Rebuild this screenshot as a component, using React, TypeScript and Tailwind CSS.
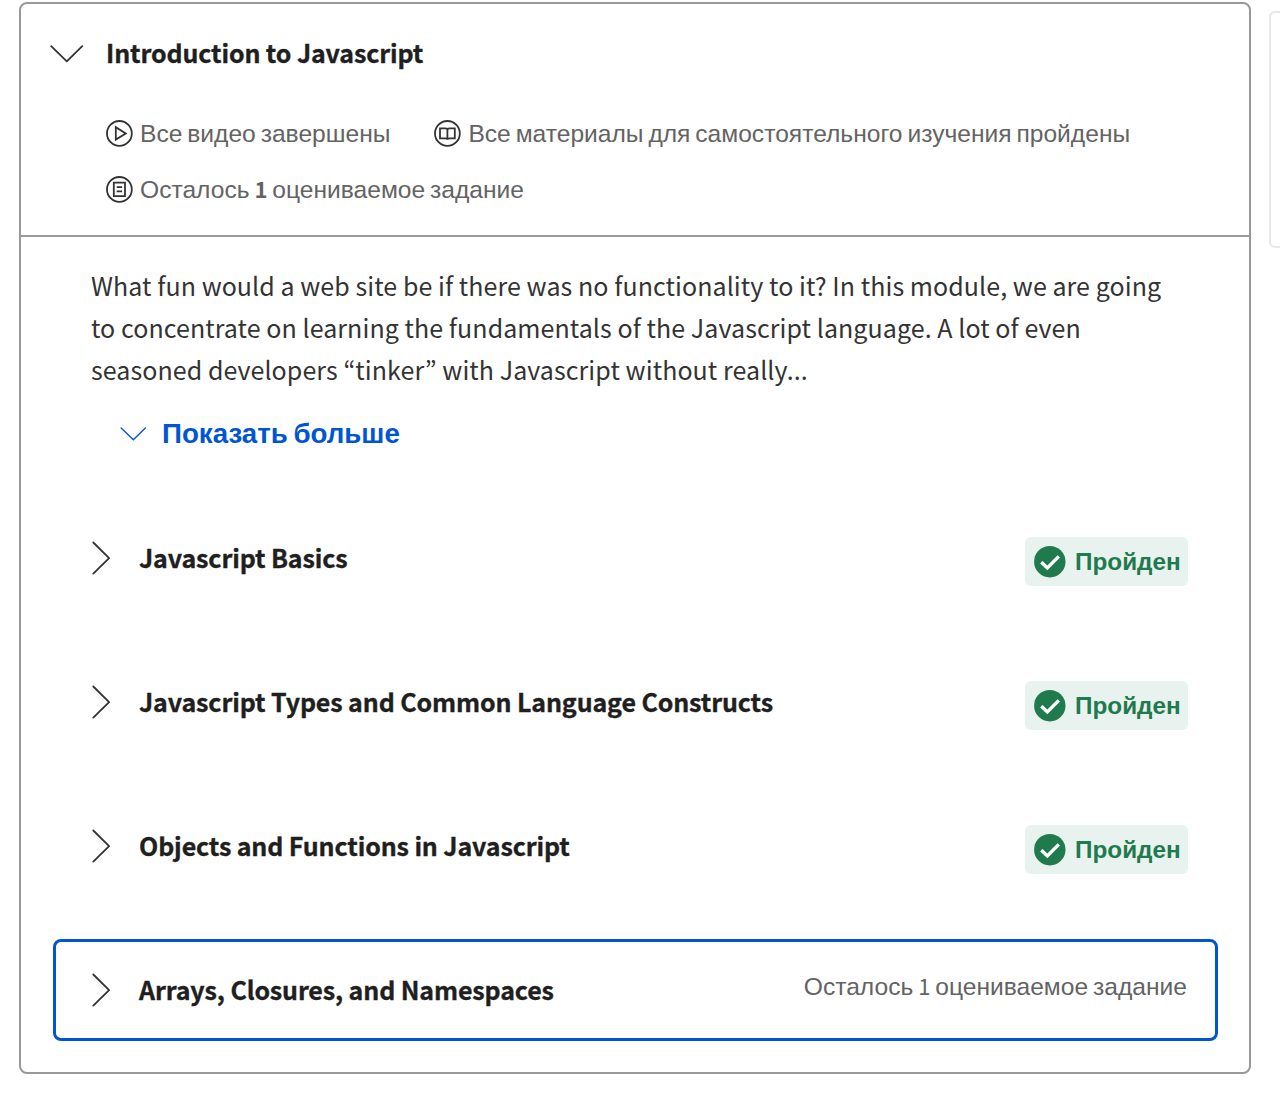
import type { ReactNode } from "react";

const latin = "font-['Noto_Sans_CJK_KR','Noto_Sans',sans-serif]";
const cyrillic = "font-['Liberation_Sans',Arial,sans-serif]";
const heading = "text-[25px] leading-9 font-bold tracking-[-0.12px] whitespace-nowrap text-[#1f1f1f] [-webkit-text-stroke:0.35px_#1f1f1f]";

function ChevronDown({ className }: { className: string }) {
  return (
    <svg className={className} viewBox="0 0 34 18" fill="none" stroke="currentColor" strokeWidth="1.8" strokeLinecap="round" strokeLinejoin="round">
      <path d="M1.2 1.2l15.6 15.2L32.2 1.2" />
    </svg>
  );
}

function ChevronRight() {
  return (
    <svg className="h-[34px] w-[19px] shrink-0 text-[#333]" viewBox="0 0 19 34" fill="none" stroke="currentColor" strokeWidth="1.8" strokeLinecap="round" strokeLinejoin="round">
      <path d="M1.3 1.5L17.1 17.2l-15.8 15.4" />
    </svg>
  );
}

function CircleIcon({ children }: { children: ReactNode }) {
  return (
    <svg className="size-7 shrink-0 text-[#333]" viewBox="0 0 28 28" fill="none" stroke="currentColor" strokeWidth="1.8">
      <circle cx="14.4" cy="14.4" r="12.4" />
      {children}
    </svg>
  );
}

function Stat({ icon, children }: { icon: ReactNode; children: ReactNode }) {
  return (
    <div className="flex h-7 items-center gap-[7px] text-[24.6px] leading-7 [word-spacing:-1.95px] text-[#636363]">
      <CircleIcon>{icon}</CircleIcon>
      <span className="whitespace-nowrap">{children}</span>
    </div>
  );
}

function Badge() {
  return (
    <div className="mt-[7px] flex h-[49px] w-[163px] items-center rounded-md bg-[#e8f2ee] pl-[9px]">
      <svg className="size-8 shrink-0" viewBox="0 0 32 32">
        <circle cx="15.8" cy="15.7" r="15.7" fill="#1f7a4d" />
        <path d="M7.3 16.2l6 5.7L24.8 10.4" fill="none" stroke="#fff" strokeWidth="3.4" />
      </svg>
      <span className={`${cyrillic} mt-[2px] ml-[9px] text-[24.3px] font-bold text-[#1f7a4d]`}>Пройден</span>
    </div>
  );
}

function Lesson({ title, active, children }: { title: string; active?: boolean; children: ReactNode }) {
  return (
    <div
      className={
        active
          ? "flex h-[102px] items-center justify-between rounded-lg border-[3px] border-[#0056d2] pr-[28px] pl-[36px]"
          : "flex h-[102px] items-center justify-between border-[3px] border-transparent pr-[27px] pl-[36px]"
      }
    >
      <div className="flex items-center">
        <ChevronRight />
        <h3 className={`${latin} ${heading} -mt-[2px] ml-[28px]`}>{title}</h3>
      </div>
      {children}
    </div>
  );
}

export default function App() {
  return (
    <div className={`${cyrillic} flex h-[1104px] w-[1280px] overflow-hidden bg-white pt-[2px] pl-[19px]`}>
      <main className="h-[1072px] w-[1232px] shrink-0 rounded-lg border-2 border-[#999]">
        <header className="h-[233px] border-b-2 border-[#999] pt-[32px]">
          <div className="flex h-9 items-center pl-[29px]">
            <ChevronDown className="h-[18px] w-[34px] text-[#333]" />
            <h2 className={`${latin} ${heading} -mt-[5px] ml-[22px]`}>Introduction to Javascript</h2>
          </div>
          <div className="mt-[47px] flex flex-wrap gap-x-[43px] gap-y-7 pl-[84px]">
            <Stat icon={<path d="M10.8 8.2v12.4L20.8 14.4z" />}>
              <span className="relative top-px">Все видео завершены</span>
            </Stat>
            <Stat icon={<path d="M7 9.3h5.4q2 0 2 1.4q0-1.4 2-1.4h5.4v10h-5.4q-2 0-2 1.4q0-1.4-2-1.4H7zM14.4 10.7v10" />}>
              <span className="relative top-px">Все материалы для самостоятельного изучения пройдены</span>
            </Stat>
            <div className="w-full">
              <Stat icon={<path d="M8.8 7.6H20v13.6H8.8zM11.7 12.2h5.4M11.7 16.4h5.4" />}>
                Осталось <b className={`${latin} text-[22px] leading-7`}>1</b> оцениваемое задание
              </Stat>
            </div>
          </div>
        </header>

        <div className="pt-[27px] pr-[31px] pl-[32px]">
          <p className={`${latin} pl-[38px] text-[25px] leading-[42px] tracking-[0.07px] whitespace-nowrap text-[#333]`}>
            What fun would a web site be if there was no functionality to it? In this module, we are going
            <br />
            to concentrate on learning the fundamentals of the Javascript language. A lot of even
            <br />
            seasoned developers “tinker” with Javascript without really...
          </p>
          <button className="mt-[28px] flex h-8 items-center pl-[67px] text-[27.7px] font-bold [word-spacing:-2.1px] text-[#0056d2]">
            <ChevronDown className="h-[14px] w-[27px]" />
            <span className="ml-[15px]">Показать больше</span>
          </button>
          <div className="mt-[57px] flex flex-col gap-[42px]">
            <Lesson title="Javascript Basics"><Badge /></Lesson>
            <Lesson title="Javascript Types and Common Language Constructs"><Badge /></Lesson>
            <Lesson title="Objects and Functions in Javascript"><Badge /></Lesson>
            <Lesson title="Arrays, Closures, and Namespaces" active>
              <span className="-mt-[6px] text-[24.6px] [word-spacing:-1.95px] text-[#636363]">
                Осталось <span className={`${latin} text-[22px] leading-7`}>1</span> оцениваемое задание
              </span>
            </Lesson>
          </div>
        </div>
      </main>
      <aside className="mt-[9px] ml-[18px] h-[237px] w-10 shrink-0 rounded-md border-2 border-[#e8e8e8]" />
    </div>
  );
}
